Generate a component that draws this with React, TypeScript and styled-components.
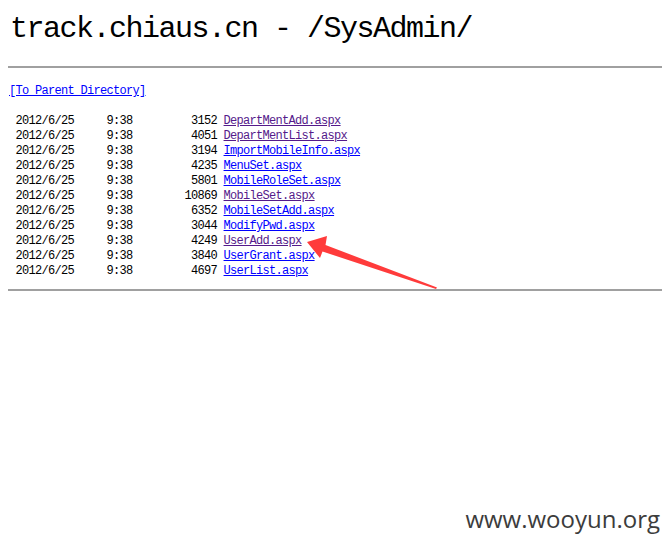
import React from "react";
import styled, { createGlobalStyle } from "styled-components";

const Global = createGlobalStyle`
  html, body { margin: 0; padding: 0; background: #fff; }
  body { font-family: "Liberation Mono", "DejaVu Sans Mono", monospace; color: #000; }
`;

const Page = styled.div`
  position: relative;
  width: 670px;
  height: 549px;
  padding: 0 8px;
  box-sizing: border-box;
  overflow: hidden;
`;

const Title = styled.h1`
  margin: 13px 0 0 0;
  padding-left: 2px;
  font-family: "Liberation Mono", "DejaVu Sans Mono", monospace;
  font-weight: normal;
  font-size: 30px;
  line-height: 32px;
  letter-spacing: -1.5px;
`;

const Rule = styled.hr<{ $top: number }>`
  margin: ${(p) => p.$top}px 0 0 0;
  width: 654px;
  height: 0;
  border: none;
  border-top: 2px solid #a0a0a0;
`;

const Listing = styled.pre`
  margin: 16px 0 0 0;
  padding-left: 1px;
  font-family: "Liberation Mono", "DejaVu Sans Mono", monospace;
  font-size: 12px;
  letter-spacing: -0.7px;
  line-height: 15px;
  white-space: pre;
`;

const FileLink = styled.a<{ $visited?: boolean }>`
  color: ${(p) => (p.$visited ? "#551a8b" : "#0000ff")};
  text-decoration: underline;
`;

const Watermark = styled.div`
  position: absolute;
  right: 10px;
  top: 503px;
  font-family: "Open Sans", "Noto Sans", sans-serif;
  font-size: 24px;
  color: #3c3c3c;
  line-height: 1.362;
`;

const ArrowLayer = styled.svg`
  position: absolute;
  left: 0;
  top: 0;
  width: 670px;
  height: 549px;
  pointer-events: none;
`;

type Entry = { size: string; name: string; visited?: boolean };

const entries: Entry[] = [
  { size: "3152", name: "DepartMentAdd.aspx", visited: true },
  { size: "4051", name: "DepartMentList.aspx", visited: true },
  { size: "3194", name: "ImportMobileInfo.aspx" },
  { size: "4235", name: "MenuSet.aspx" },
  { size: "5801", name: "MobileRoleSet.aspx" },
  { size: "10869", name: "MobileSet.aspx", visited: true },
  { size: "6352", name: "MobileSetAdd.aspx" },
  { size: "3044", name: "ModifyPwd.aspx" },
  { size: "4249", name: "UserAdd.aspx", visited: true },
  { size: "3840", name: "UserGrant.aspx" },
  { size: "4697", name: "UserList.aspx" },
];

export default function App() {
  return (
    <Page>
      <Global />
      <Title>track.chiaus.cn - /SysAdmin/</Title>
      <Rule $top={21} />
      <Listing>
        <FileLink href="#">[To Parent Directory]</FileLink>
        {"\n\n"}
        {entries.map((e) => (
          <React.Fragment key={e.name}>
            {" 2012/6/25     9:38 " + e.size.padStart(12, " ") + " "}
            <FileLink href="#" $visited={e.visited}>
              {e.name}
            </FileLink>
            {"\n"}
          </React.Fragment>
        ))}
      </Listing>
      <Rule $top={10} />
      <ArrowLayer viewBox="0 0 670 549">
        <polygon
          points="307,242 327,236 325.5,245 437,287.5 436,289 322.5,251.5 320,258"
          fill="#ff3b3b"
        />
      </ArrowLayer>
      <Watermark>www.wooyun.org</Watermark>
    </Page>
  );
}
